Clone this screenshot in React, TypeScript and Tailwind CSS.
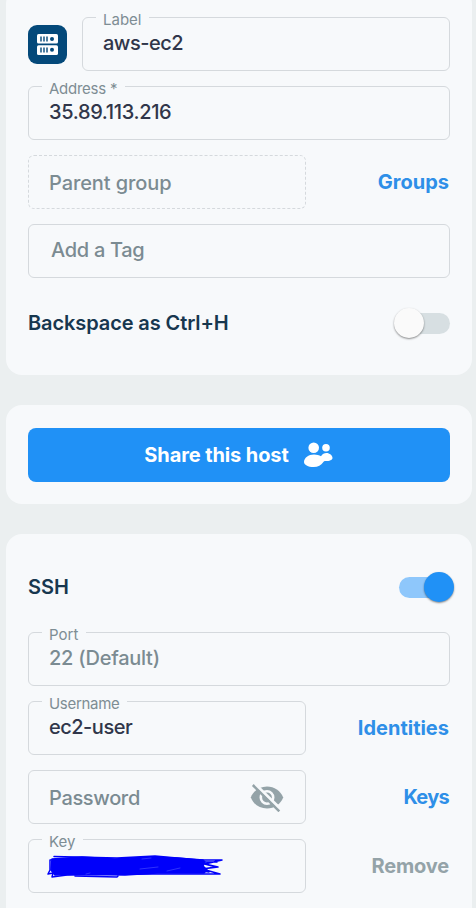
import type { ReactNode } from "react";
import clsx from "clsx";

type FieldProps = {
  label?: string;
  labelClass?: string;
  className?: string;
  children?: ReactNode;
};

function Field({ label, labelClass, className, children }: FieldProps) {
  return (
    <div className={clsx("relative flex h-[54px] items-center rounded-md border border-[#d5d9dd] pl-5", className)}>
      {label && (
        <span
          className={clsx(
            "absolute -top-1.5 left-[13px] flex h-4 items-center whitespace-nowrap bg-[#f7f9fb] pl-[7px] pr-2 text-[15px] leading-4 text-[#7e8d94]",
            labelClass,
          )}
        >
          {label}
        </span>
      )}
      {children}
    </div>
  );
}

function Switch({ on = false }: { on?: boolean }) {
  return (
    <div className={clsx("relative h-[21px] w-[51px] rounded-full", on ? "bg-[#8ec7fb]" : "bg-[#d7dfe2]")}>
      <div
        className={clsx(
          "absolute -top-[5px] size-[30px] rounded-full shadow-[0_1px_2px_rgba(0,0,0,0.45)]",
          on ? "-right-1 bg-[#2091f6]" : "-left-[5px] bg-[#fafafa]",
        )}
      />
    </div>
  );
}

function ServerIcon() {
  return (
    <div className="flex size-[39px] shrink-0 items-center justify-center rounded-[9px] bg-[#04497a]">
      <svg width="21" height="21" viewBox="0 0 21 21">
        <rect width="21" height="9.6" rx="1.6" fill="#fff" />
        <rect y="11.2" width="21" height="9.8" rx="1.6" fill="#fff" />
        <path d="M4 2.5v5M7 2.500v5M10 2.500v5M4 13.500v5M7 13.500v5M10 13.500v5" stroke="#04497a" strokeWidth="1.4" />
        <circle cx="15" cy="5" r="2" fill="#04497a" />
        <circle cx="15" cy="15.8" r="2" fill="#04497a" />
      </svg>
    </div>
  );
}

function PeopleIcon() {
  return (
    <svg width="30" height="26" viewBox="0 0 30 26" fill="#fff">
      <circle cx="9.700" cy="5.700" r="5.300" />
      <circle cx="22" cy="5.800" r="3.800" />
      <path d="M0 20C0 15.800 4.500 12.400 10 12.400c2.800 0 5.200.7 7 1.800 1.400-2 3.200-3.200 5.400-3.200 3.300 0 6.100 2.600 6.100 4.900 0 2-3.200 3.200-6.600 3.200-1.500 0-2.100.4-2.900 1.400C17.300 23 14 25 9.700 25 4 25 0 22.900 0 20Z" />
    </svg>
  );
}

function EyeOffIcon() {
  return (
    <svg width="34" height="28" viewBox="0 0 34 28" className="relative top-px">
      <path d="M.8 13.500C3.500 6.700 9.700 2.500 17 2.500s13.500 4.200 16.200 11C30.500 20.300 24.300 24.500 17 24.500S3.500 20.300.8 13.500Z" fill="#94a3a8" />
      <circle cx="17" cy="13.500" r="6.200" fill="#94a3a8" stroke="#f7f9fb" strokeWidth="2.600" />
      <path d="M4.700-.2 31.700 26.100" stroke="#f7f9fb" strokeWidth="3" />
      <path d="M2.800 1 29.300 27.300" stroke="#94a3a8" strokeWidth="2.500" />
    </svg>
  );
}

function Scribble() {
  return (
    <svg
      width="178"
      height="24"
      viewBox="0 0 178 24"
      className="relative top-px -ml-[2px]"
      fill="none"
      stroke="#0000fa"
      strokeLinejoin="round"
      strokeLinecap="round"
    >
      <path d="M5 4 35 2 68 4 102 2 130 3 156 5 158 7 156 11 160 15 157 18 110 18 78 20 35 19 8 20 4 15Z" fill="#0000fa" strokeWidth="1.500" />
      <path d="M7 1.500 70 3 108 1 152 5 175 5 158 9 171 12 155 14 173 19 105 19 20 20 5 22 6 18 1 19 3 15 3 5 14 4M170 7 150 7 169 12 148 15 162 17M28 21 70 22 71 21" strokeWidth="1.500" />
      <path d="M93 14 111 12M120 16 133 13M39 19 43 18M95 4 104 3" stroke="#4e52ff" strokeWidth=".6" />
    </svg>
  );
}

const value = "relative whitespace-nowrap text-xl leading-6 font-[450]";
const action = "flex-1 whitespace-nowrap pr-px text-right text-xl leading-6 font-bold";

export default function App() {
  return (
    <div className="h-[908px] overflow-hidden bg-[#ebeff0] pr-1 pl-1.5 font-['Inter','Liberation_Sans',sans-serif]">
      <section className="-mt-3 flex h-[387px] flex-col gap-[15px] rounded-2xl bg-[#f7f9fb] px-[22px] pt-[29px]">
        <div className="flex items-center gap-[15px]">
          <ServerIcon />
          <Field label="Label" className="flex-1">
            <span className={clsx(value, "-top-px tracking-[-0.5px] text-[#30364a]")}>aws-ec2</span>
          </Field>
        </div>
        <Field label="Address *" labelClass="tracking-[-0.25px]">
          <span className={clsx(value, "-top-px tracking-[-0.35px] text-[#30364a]")}>35.89.113.216</span>
        </Field>
        <div className="flex items-center">
          <Field className="w-[278px] border-dashed">
            <span className={clsx(value, "top-px tracking-[-0.1px] text-[#7b8b92]")}>Parent group</span>
          </Field>
          <span className={clsx(action, "text-[#2e8fe8]")}>Groups</span>
        </div>
        <Field>
          <span className={clsx(value, "-top-px left-0.5 tracking-[-0.3px] text-[#7b8b92]")}>Add a Tag</span>
        </Field>
        <div className="mt-[15px] flex h-[30px] items-center justify-between">
          <span className="text-xl font-semibold tracking-[-0.1px] text-[#17374f]">Backspace as Ctrl+H</span>
          <Switch />
        </div>
      </section>

      <section className="mt-[30px] h-[99px] rounded-2xl bg-[#f7f9fb] px-[22px] pt-[23px]">
        <button className="flex h-[54px] w-full items-center justify-center gap-[15px] rounded-lg bg-[#2091f6] text-xl font-bold text-white">
          <span className="tracking-[-0.1px]">Share this host</span>
          <PeopleIcon />
        </button>
      </section>

      <section className="mt-[30px] flex h-[420px] flex-col gap-[15px] rounded-2xl bg-[#f7f9fb] px-[22px] pt-[38px]">
        <div className="mb-[15px] flex h-[30px] items-center justify-between">
          <span className="text-xl font-semibold text-[#17374f]">SSH</span>
          <Switch on />
        </div>
        <Field label="Port">
          <span className={clsx(value, "-top-px tracking-[-0.25px] text-[#7b8b92]")}>22 (Default)</span>
        </Field>
        <div className="flex items-center">
          <Field label="Username" labelClass="tracking-[-0.3px]" className="w-[278px]">
            <span className={clsx(value, "-top-px tracking-[-0.5px] text-[#30364a]")}>ec2-user</span>
          </Field>
          <span className={clsx(action, "text-[#2e8fe8]")}>Identities</span>
        </div>
        <div className="flex items-center">
          <Field className="w-[278px] justify-between pr-[21px]">
            <span className={clsx(value, "top-px tracking-[-0.35px] text-[#7b8b92]")}>Password</span>
            <EyeOffIcon />
          </Field>
          <span className={clsx(action, "tracking-[-0.7px] text-[#2e8fe8]")}>Keys</span>
        </div>
        <div className="flex items-center">
          <Field label="Key" className="w-[278px]">
            <Scribble />
          </Field>
          <span className={clsx(action, "tracking-[-0.15px] text-[#94a3a8]")}>Remove</span>
        </div>
      </section>
    </div>
  );
}
